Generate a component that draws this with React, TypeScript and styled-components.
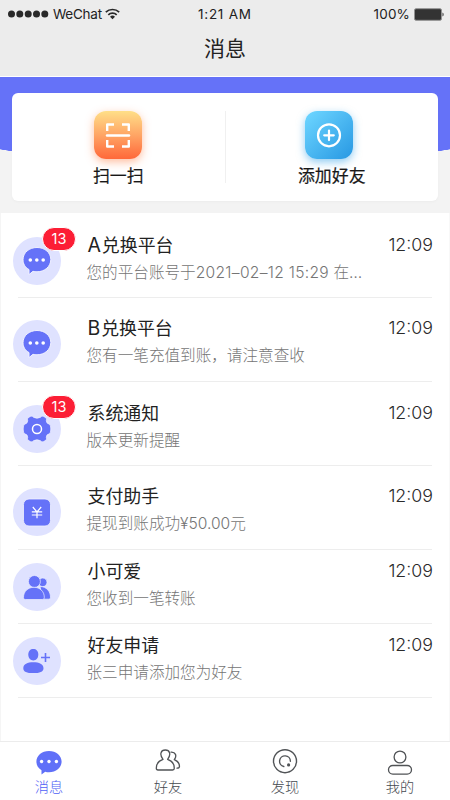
import React from 'react';
import styled, { createGlobalStyle, css } from 'styled-components';

const GlobalStyle = createGlobalStyle`
  * { box-sizing: border-box; }
  body {
    margin: 0;
    background: #fff;
    font-family: Inter, 'Noto Sans CJK SC', sans-serif;
    color: #222;
  }
`;

const Screen = styled.div`
  width: 450px;
  height: 800px;
  display: flex;
  flex-direction: column;
  overflow: hidden;
  background: #fff;
`;

const StatusBar = styled.div`
  height: 28px;
  flex: none;
  display: grid;
  grid-template-columns: 190px 1fr 190px;
  align-items: center;
  padding: 0 6px 0 8px;
  background: #ececec;
  font-size: 13.5px;
  line-height: 28px;
`;

const StatusGroup = styled.div<{ $end?: boolean }>`
  display: flex;
  align-items: center;
  justify-content: ${(p) => (p.$end ? 'flex-end' : 'flex-start')};
`;

const Signal = styled.svg`
  margin-right: 4px;
`;

const Carrier = styled.span`
  letter-spacing: -0.25px;
  margin-right: 3px;
`;

const Clock = styled.span`
  letter-spacing: 0.75px;
  white-space: nowrap;
`;

const Percent = styled.span`
  letter-spacing: 0.15px;
  margin-right: 4px;
`;

const NavBar = styled.header`
  height: 49px;
  flex: none;
  display: flex;
  justify-content: center;
  background: #ececec;
  border-bottom: 1px solid #fff;
  font-size: 21px;
  line-height: 41px;
`;

const Hero = styled.section`
  height: 136px;
  flex: none;
  padding: 16px 12px 12px;
  background: radial-gradient(ellipse 420px 112px at 50% -22px, #6572f8 99.6%, #f3f3f3 100%);
`;

const ActionCard = styled.div`
  height: 108px;
  display: flex;
  align-items: center;
  background: #fff;
  border-radius: 6px;
  box-shadow: 0 1px 3px rgba(0, 0, 0, 0.03);
`;

const Divider = styled.div`
  width: 1px;
  height: 72px;
  background: #f0f0f0;
`;

const Action = styled.button`
  flex: 1;
  height: 100%;
  padding: 18px 0 0;
  border: 0;
  background: none;
  display: flex;
  flex-direction: column;
  align-items: center;
  gap: 4px;
  font: 400 16.9px/26px Inter, 'Noto Sans CJK SC', sans-serif;
  -webkit-text-stroke: 0.2px #181818;
  color: #181818;
`;

const ActionTile = styled.span<{ $tone: 'orange' | 'blue' }>`
  width: 48px;
  height: 48px;
  border-radius: 12px;
  display: flex;
  ${(p) =>
    p.$tone === 'orange'
      ? css`
          background: linear-gradient(180deg, #ffdf88 0%, #ffa565 50%, #ff6839 100%);
          box-shadow: 0 3px 8px rgba(255, 125, 65, 0.5);
        `
      : css`
          margin-right: 6px;
          background: linear-gradient(135deg, #6bd4ff 5%, #2b9be4 95%);
          box-shadow: 0 3px 8px rgba(50, 160, 232, 0.55);
        `}
`;

const List = styled.main`
  flex: 1;
  border-left: 1px solid #f5f5f5;
  border-right: 1px solid #f8f8f8;
`;

const Row = styled.article<{ $height: number; $top: number }>`
  height: ${(p) => p.$height}px;
  margin: 0 17px;
  padding-top: ${(p) => p.$top}px;
  border-bottom: 1px solid #ededed;
  display: flex;
  align-items: flex-start;
`;

const Avatar = styled.div`
  position: relative;
  width: 48px;
  height: 48px;
  flex: none;
  margin-left: -5px;
  border-radius: 50%;
  background: #dfe2ff;
  display: flex;
`;

const Badge = styled.span`
  position: absolute;
  left: 29px;
  top: -10px;
  width: 34px;
  height: 24px;
  border: 1px solid #fff;
  border-radius: 12px;
  background: #fc1e35;
  color: #fff;
  font-size: 14.5px;
  line-height: 22px;
  text-align: center;
`;

const RowText = styled.div`
  flex: 1;
  min-width: 0;
  margin: -5px 0 0 25.500px;
`;

const Title = styled.h2`
  margin: 0;
  padding-left: 1px;
  font-size: 17.9px;
  line-height: 28px;
  font-weight: 400;
  color: #222;
  white-space: nowrap;
`;

const TitleLetter = styled.span`
  font-size: 19.5px;
  line-height: 1;
  letter-spacing: 0.9px;
`;

const Preview = styled.p`
  margin: 0;
  font-size: 15.6px;
  line-height: 26px;
  font-weight: 300;
  color: #757575;
  white-space: nowrap;
`;

const Stamp = styled.span`
  letter-spacing: 0.3px;
`;

const Time = styled.time`
  margin: -6px -1px 0 0;
  font-size: 17.8px;
  line-height: 28px;
  font-weight: 300;
  color: #2a2a2a;
`;

const TabBar = styled.nav`
  height: 59px;
  flex: none;
  display: grid;
  grid-template-columns: 98px 138px 98px 116px;
  border-top: 1px solid #ececec;
`;

const Tab = styled.button<{ $active?: boolean; $shift?: number }>`
  border: 0;
  background: none;
  padding: 4px 0 0 ${(p) => p.$shift || 0}px;
  display: flex;
  flex-direction: column;
  align-items: center;
  font: 300 14.2px/20px Inter, 'Noto Sans CJK SC', sans-serif;
  color: ${(p) => (p.$active ? '#5060f5' : '#44494f')};
  gap: 1px;
`;

const ChatIcon = () => (
  <svg width="48" height="48" viewBox="0 0 48 48">
    <path d="M24 10.500c7.700 0 13.800 5 13.800 12S31.700 34.800 24 34.800c-1.500 0-2.700-.1-4-.5L16 37.600v-5c-3.800-2.200-6-5.700-6-9.800C10 15.500 16.300 10.500 24 10.500z" fill="#6572f8" stroke="#f0f1ff" strokeWidth="1" />
    <g fill="#fff"><circle cx="17.300" cy="23" r="1.800" /><circle cx="23.800" cy="23" r="1.800" /><circle cx="30.200" cy="23" r="1.800" /></g>
  </svg>
);

const GearIcon = () => (
  <svg width="48" height="48" viewBox="0 0 48 48">
    <path d="M17.800 11.200 Q19.300 10.800 20.500 12.300 Q24 14.200 27.500 12.300 Q28.700 10.800 30.200 11.200 L33 12.800 Q34 14 33.300 15.800 Q33.500 18.700 36.300 19.200 Q37.800 20 37.800 24 Q37.800 28 36.300 28.800 Q33.500 29.300 33.300 32.200 Q34 34 33 35.200 L30.200 36.800 Q28.700 37.200 27.500 35.700 Q24 33.800 20.500 35.700 Q19.300 37.200 17.800 36.800 L15 35.200 Q14 34 14.700 32.200 Q14.500 29.300 11.700 28.800 Q10.200 28 10.200 24 Q10.200 20 11.700 19.200 Q14.500 18.700 14.700 15.800 Q14 14 15 12.800z" fill="#6572f8" stroke="#f0f1ff" strokeWidth="0.700" />
    <circle cx="24" cy="24" r="4.500" fill="#6572f8" stroke="#fff" strokeWidth="1.500" />
  </svg>
);

const PayIcon = () => (
  <svg width="48" height="48" viewBox="0 0 48 48" fill="none">
    <rect x="10.500" y="11" width="27" height="27" rx="5.500" fill="#6572f8" stroke="#f0f1ff" strokeWidth="0.800" />
    <path d="M19.800 19l4.200 5 4.200-5M24 24v6.200M18.800 23.900h10.400M18.800 27h10.400" stroke="#fff" strokeWidth="1.200" />
  </svg>
);

const FriendsIcon = () => (
  <svg width="48" height="48" viewBox="0 0 48 48" fill="#6572f8" stroke="#eef0ff" strokeWidth="0.700">
    <circle cx="29.700" cy="19.300" r="4.300" />
    <path d="M27 23.500c6.500 0 10.500 5 10.500 10.700 0 1.300-.6 2-1.800 2H30z" />
    <circle cx="21.400" cy="18.500" r="6" />
    <path d="M21 24.300c6 0 10.300 4.200 10.300 10 0 1.500-.6 2.200-2 2.200H12.500c-1.500 0-2-.7-2-2.200 0-5.800 4.500-10 10.500-10z" />
  </svg>
);

const AddFriendIcon = () => (
  <svg width="48" height="48" viewBox="0 0 48 48" fill="#6572f8">
    <path d="M20.300 12c2.900 0 5 2 5 5.600s-2.100 5.900-5 5.900-5-2.300-5-5.900 2.100-5.600 5-5.600z" />
    <path d="M20.300 25.200c5.800 0 10.200 1.800 10.200 6 0 3.700-3.800 4.900-10.200 4.900s-10-1.200-10-4.900c0-4.200 4.200-6 10-6z" />
    <path d="M32.500 16v9M28 20.500h9" fill="none" stroke="#6572f8" strokeWidth="1.600" />
  </svg>
);

const rows = [
  { letter: 'A', title: '兑换平台', text: '您的平台账号于', stamp: '2021–02–12 15:29', tail: ' 在…', Icon: ChatIcon, badge: 13, height: 85, top: 24 },
  { letter: 'B', title: '兑换平台', text: '您有一笔充值到账，请注意查收', Icon: ChatIcon, height: 84, top: 22 },
  { title: '系统通知', text: '版本更新提醒', Icon: GearIcon, badge: 13, height: 84, top: 22.5 },
  { title: '支付助手', text: '提现到账成功¥50.00元', Icon: PayIcon, height: 84, top: 22 },
  { title: '小可爱', text: '您收到一笔转账', Icon: FriendsIcon, height: 74, top: 12.5 },
  { title: '好友申请', text: '张三申请添加您为好友', Icon: AddFriendIcon, height: 74, top: 13 },
];

export default function App() {
  return (
    <>
      <GlobalStyle />
      <Screen>
        <StatusBar>
          <StatusGroup>
            <Signal width="41" height="8" viewBox="0 0 41 8" fill="#292929">
              {[3.5, 11.8, 20.2, 28.5, 36.8].map((x) => (
                <circle key={x} cx={x} cy="4" r="3.500" />
              ))}
            </Signal>
            <Carrier>WeChat</Carrier>
            <svg width="15" height="12" viewBox="0 0 15 12" fill="none" stroke="#292929" strokeWidth="1.700">
              <path d="M.8 4.200a9.600 9.600 0 0 1 13.400 0M3.300 6.800a6 6 0 0 1 8.400 0" />
              <path d="M5 8.700a3.600 3.600 0 0 1 5 0L7.500 11.300z" fill="#292929" stroke="none" />
            </svg>
          </StatusGroup>
          <Clock>1:21 AM</Clock>
          <StatusGroup $end>
            <Percent>100%</Percent>
            <svg width="30" height="13" viewBox="0 0 30 13">
              <rect x=".5" y=".7" width="27" height="11.600" rx="1.500" fill="#333" stroke="#929292" />
              <path d="M28.500 4.500c1.500.5 1.500 3.500 0 4z" fill="#333" />
            </svg>
          </StatusGroup>
        </StatusBar>
        <NavBar>消息</NavBar>
        <Hero>
          <ActionCard>
            <Action>
              <ActionTile $tone="orange">
                <svg width="48" height="48" viewBox="0 0 48 48" fill="none" stroke="#fff" strokeWidth="2.400" strokeLinejoin="round">
                  <path d="M13.200 20v-6.500H20M28 13.500h6.800V20M13.200 29v6.500H20M28 35.500h6.800V29" />
                  <path d="M13 24.500h22" strokeLinecap="round" />
                </svg>
              </ActionTile>
              扫一扫
            </Action>
            <Divider />
            <Action>
              <ActionTile $tone="blue">
                <svg width="48" height="48" viewBox="0 0 48 48" fill="none" stroke="#fff" strokeWidth="2.200" strokeLinecap="round">
                  <circle cx="24" cy="24.300" r="11" />
                  <path d="M24 19.500v9.600M19.200 24.300h9.600" />
                </svg>
              </ActionTile>
              添加好友
            </Action>
          </ActionCard>
        </Hero>
        <List>
          {rows.map(({ letter, title, text, stamp, tail, Icon, badge, height, top }) => (
            <Row key={(letter ?? '') + title} $height={height} $top={top}>
              <Avatar>
                <Icon />
                {badge && <Badge>{badge}</Badge>}
              </Avatar>
              <RowText>
                <Title>
                  {letter && <TitleLetter>{letter}</TitleLetter>}
                  {title}
                </Title>
                <Preview>
                  {text}
                  {stamp && <Stamp>{stamp}</Stamp>}
                  {tail}
                </Preview>
              </RowText>
              <Time>12:09</Time>
            </Row>
          ))}
        </List>
        <TabBar>
          <Tab $active>
            <svg width="28" height="30" viewBox="0 0 28 30">
              <path d="M14 5c7.200 0 12.600 4.700 12.600 10.600S21.200 26.200 14 26.200c-1.500 0-2.600-.1-3.800-.5L6.500 28.500v-4.300c-3.300-2-5.100-5-5.100-8.600C1.400 9.700 6.800 5 14 5z" fill="#6070f8" />
              <g fill="#fff"><circle cx="6.600" cy="15.500" r="1.700" /><circle cx="14" cy="15.500" r="1.700" /><circle cx="21.400" cy="15.500" r="1.700" /></g>
            </svg>
            消息
          </Tab>
          <Tab $shift={2}>
            <svg width="28" height="30" viewBox="0 0 28 30" fill="none" stroke="#505356" strokeWidth="1.300" strokeLinejoin="round" strokeLinecap="round">
              <path d="M9 13.300C5.200 8.500 6.800 4 11.300 4s6.100 4.500 2.300 9.300c4.500 1.500 6.700 5.200 6.700 9 0 1.200-.5 1.700-1.700 1.700H4c-1.200 0-1.700-.5-1.700-1.700 0-3.800 2.200-7.500 6.700-9z" />
              <path d="M17 6.200c4.600-.3 6.200 3.600 3.300 7.500 3.500 1.500 5.200 4.300 5.200 6.600 0 1.300-.6 1.900-2.500 1.900" />
            </svg>
            好友
          </Tab>
          <Tab>
            <svg width="28" height="30" viewBox="0 0 28 30" fill="none" stroke="#505356" strokeWidth="1.400" strokeLinecap="round">
              <circle cx="14" cy="15.200" r="11.500" />
              <path d="M12.800 20.500A5.400 5.400 0 1 1 19.400 15.200" />
              <circle cx="17.600" cy="18.900" r="1.600" fill="#505356" stroke="none" />
            </svg>
            发现
          </Tab>
          <Tab $shift={16}>
            <svg width="28" height="30" viewBox="0 0 28 30" fill="none" stroke="#505356" strokeWidth="1.300">
              <circle cx="14" cy="11" r="5.900" />
              <rect x="2.500" y="19.500" width="23" height="8.600" rx="4.300" />
            </svg>
            我的
          </Tab>
        </TabBar>
      </Screen>
    </>
  );
}
